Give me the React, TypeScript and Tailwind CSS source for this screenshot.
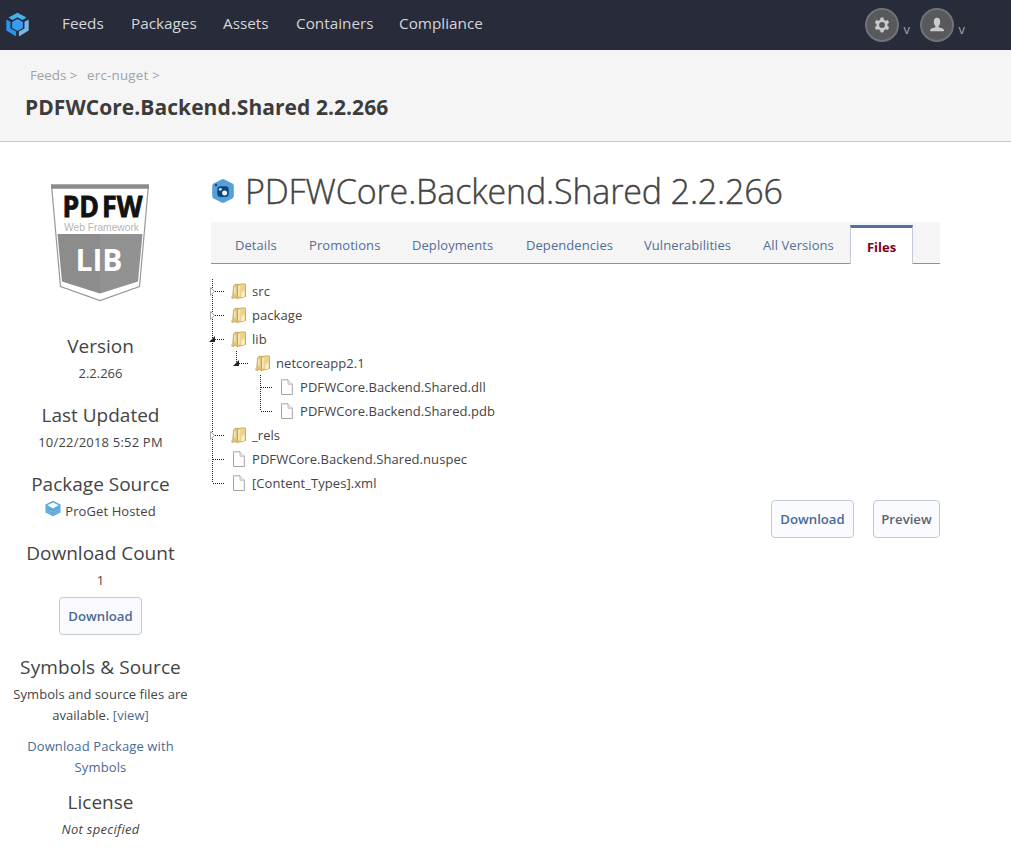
import React from "react";

function LogoIcon() {
  return (
    <svg width="25" height="26" viewBox="0 0 24 26" className="block">
      <path d="M3 5.500 12 .8l9 4.700-4 2.400-5-2.600-5 2.600z" fill="#41b4ee" />
      <path d="M.8 7.600 5 9.800v6.600l5.600 3.100v5L.8 18.600z" fill="#2b93ec" />
      <path d="M23.200 7.600 19 9.800v6.600l-5.600 3.100v5l9.800-5.900z" fill="#79b9ea" />
      <path d="m12 7 5.400 3v6L12 19l-5.400-3v-6z" fill="#3a9bf4" />
    </svg>
  );
}

function GearIcon() {
  return (
    <svg width="16" height="16" viewBox="0 0 16 16" className="block">
      <g fill="#c9cacc">
        <circle cx="8" cy="8" r="5.6" />
        <rect x="6.3" y=".6" width="3.4" height="14.8" rx=".8" />
        <rect x="6.3" y=".6" width="3.4" height="14.8" rx=".8" transform="rotate(60 8 8)" />
        <rect x="6.3" y=".6" width="3.4" height="14.8" rx=".8" transform="rotate(120 8 8)" />
      </g>
      <circle cx="8" cy="8" r="2.9" fill="#58595c" />
    </svg>
  );
}

function UserIcon() {
  return (
    <svg width="16" height="16" viewBox="0 0 16 16" className="block">
      <ellipse cx="8" cy="5" rx="3.2" ry="4.2" fill="#c9cacc" />
      <path d="M6.4 8h3.2v2.2l4.2 1.4q1.2.5 1.2 2.6H1q0-2.1 1.2-2.6l4.2-1.4z" fill="#c9cacc" />
    </svg>
  );
}

function NugetIcon() {
  return (
    <svg width="24" height="26" viewBox="0 0 24 26" className="block">
      <path d="M10.6 1.4q1.4-.7 2.8 0l8 4.2q1.4.8 1.4 2.3v10.2q0 1.5-1.4 2.3l-8 4.2q-1.4.7-2.8 0l-8-4.2q-1.4-.8-1.4-2.3V7.900q0-1.500 1.400-2.300z" fill="#559fdb" />
      <rect x="6.300" y="8.200" width="11.400" height="10.800" rx="3.200" fill="#0e4679" />
      <circle cx="5" cy="7" r="1.200" fill="#0e4679" />
      <circle cx="9.300" cy="11.300" r="1.400" fill="#d6ebfa" />
      <circle cx="13.600" cy="15" r="2.500" fill="#e4f3fd" />
    </svg>
  );
}

function HostedIcon() {
  return (
    <svg width="16" height="17" viewBox="0 0 16 17" className="block">
      <path d="M.5 4.500 8 .7l7.500 3.800v8L8 16.300.5 12.500z" fill="#5da7d9" />
      <path d="M2.200 5.200 8 2.600l5.800 2.600L8 8.400z" fill="#f4fafe" />
      <path d="M.5 8.500 8 12.200l7.500-3.700M.5 10.800 8 14.500l7.500-3.700" fill="none" stroke="#8fc4e6" strokeWidth=".6" />
    </svg>
  );
}

function PackageBadge() {
  return (
    <svg width="100" height="118" viewBox="0 0 100 118" className="mr-px block">
      <path d="M1.500 1h97l-9 101.500L50 116.500l-39.500-14z" fill="#fff" stroke="#999" strokeWidth="1.200" />
      <path d="M1 .5h98v4.200H1z" fill="#8b8b8b" />
      <path d="M7.500 50H50v59.500L12 97.500z" fill="#8c8c8c" />
      <path d="M50 50h42.500L88 97.500 50 109.500z" fill="#929292" />
      <text x="12.500" y="32.500" textLength="80" lengthAdjust="spacingAndGlyphs" wordSpacing="-4" fontFamily="Open Sans" fontWeight="700" fontSize="28" fill="#111" stroke="#111" strokeWidth=".8">PD FW</text>
      <text x="14" y="47" textLength="75" lengthAdjust="spacingAndGlyphs" fontFamily="Liberation Sans" fontSize="10.500" fill="#b5b5b5">Web Framework</text>
      <text x="25.500" y="87" textLength="47" lengthAdjust="spacingAndGlyphs" fontFamily="Open Sans" fontWeight="700" fontSize="31" fill="#fff">LIB</text>
    </svg>
  );
}

function FolderIcon() {
  return (
    <svg width="16" height="16" viewBox="0 0 16 16" className="block">
      <path d="M2.500 3.500 4 1.200h3v12.300L3 15.200H.8q-.3-1.500 1-3z" fill="#dfc67e" stroke="#bfa25a" strokeWidth=".8" />
      <path d="M6.500 1.500 13.500.8q1 0 1 1v11.800L7 15.400H5.500l1-2z" fill="#ecd48c" stroke="#bd9d50" strokeWidth=".8" />
      <path d="M8 3v10M4 4v7" stroke="#fbf0c8" strokeWidth="1.200" />
      <path d="M10.500 8.500h3v5l-3 .8z" fill="#fbefc6" />
    </svg>
  );
}

function FileIcon() {
  return (
    <svg width="16" height="16" viewBox="0 0 16 16" className="block">
      <path d="M2.500.8H9l4.300 4.400v10.300H2.500z" fill="#fdfdfd" stroke="#a3a3a3" strokeWidth="1" />
      <path d="M9 .8v4.400h4.300" fill="#eee" stroke="#b0b0b0" strokeWidth=".8" />
    </svg>
  );
}

type Row = { name: string; kind: "folder" | "file"; depth: number; state?: "open" | "closed"; last?: boolean };

const rows: Row[] = [
  { name: "src", kind: "folder", depth: 0, state: "closed" },
  { name: "package", kind: "folder", depth: 0, state: "closed" },
  { name: "lib", kind: "folder", depth: 0, state: "open" },
  { name: "netcoreapp2.1", kind: "folder", depth: 1, state: "open", last: true },
  { name: "PDFWCore.Backend.Shared.dll", kind: "file", depth: 2 },
  { name: "PDFWCore.Backend.Shared.pdb", kind: "file", depth: 2, last: true },
  { name: "_rels", kind: "folder", depth: 0, state: "closed" },
  { name: "PDFWCore.Backend.Shared.nuspec", kind: "file", depth: 0 },
  { name: "[Content_Types].xml", kind: "file", depth: 0, last: true },
];

function Branch({ row }: { row: Row }) {
  return (
    <svg width="24" height="24" viewBox="0 0 24 24" className="block shrink-0">
      <path d={row.last ? "M4.500 0v12" : "M4.500 0v24"} stroke="#222" strokeDasharray="1 1" />
      <path d="M5 12.500h12" stroke="#222" strokeDasharray="1 1" />
      {row.state === "closed" && <path d="M2.500 8.500 6.500 12.500l-4 4z" fill="#fff" stroke="#999" strokeWidth=".8" />}
      {row.state === "open" && <path d="M7 9v6H1z" fill="#222" />}
    </svg>
  );
}

function Guide({ on }: { on: boolean }) {
  return (
    <svg width="24" height="24" viewBox="0 0 24 24" className="block shrink-0">
      {on && <path d="M4.500 0v24" stroke="#222" strokeDasharray="1 1" />}
    </svg>
  );
}

function TreeRow({ row }: { row: Row }) {
  return (
    <li className="flex h-6 items-center">
      {row.depth > 0 && <Guide on />}
      {row.depth > 1 && <Guide on={false} />}
      <Branch row={row} />
      <span className="-ml-px mr-[5px]">{row.kind === "folder" ? <FolderIcon /> : <FileIcon />}</span>
      <span className="pt-0.5 tracking-[0.06px]">{row.name}</span>
    </li>
  );
}

function Button({ children, className }: { children: React.ReactNode; className: string }) {
  return (
    <button className={`h-[38px] rounded border border-[#c3c9d3] bg-[#fafbfe] pt-px text-[13.2px] font-semibold ${className}`}>{children}</button>
  );
}

function Fact({ title, children }: { title: string; children: React.ReactNode }) {
  return (
    <section className="flex h-[69px] flex-col items-center">
      <h3 className="text-[19px] leading-[30px] text-[#444]">{title}</h3>
      <div className="mt-px flex h-6 items-center">{children}</div>
    </section>
  );
}

const nav = [
  { label: "Feeds", cls: "w-[69px]" },
  { label: "Packages", cls: "w-[92px]" },
  { label: "Assets", cls: "w-[73px]" },
  { label: "Containers", cls: "w-[103px]" },
  { label: "Compliance", cls: "w-[110px]" },
];

const tabs = [
  { label: "Details", cls: "w-[74px]" },
  { label: "Promotions", cls: "w-[103px]" },
  { label: "Deployments", cls: "w-[114px]" },
  { label: "Dependencies", cls: "w-[118px]" },
  { label: "Vulnerabilities", cls: "w-[119px]" },
  { label: "All Versions", cls: "w-[87px]" },
];

export default function App() {
  return (
    <div className="h-[852px] w-[1011px] overflow-hidden bg-white font-['Open_Sans','Noto_Sans',sans-serif] text-[13px] text-[#444] whitespace-nowrap">
      <header className="flex h-[50px] items-center bg-[#282b3a] pl-[5px]">
        <LogoIcon />
        <nav className="ml-8 flex h-[48px] flex-1 items-center pb-[3px] text-[15.3px] text-[#d4d5d8]">
          {nav.map((n) => (
            <a key={n.label} className={n.cls}>{n.label}</a>
          ))}
        </nav>
        <div className="flex items-center pr-[46px]">
          <div className="flex size-[34px] items-center justify-center rounded-full border-2 border-[#707278] bg-[#58595c]"><GearIcon /></div>
          <span className="ml-[5px] w-4 pt-2 text-[13px] leading-4 text-[#a5a6aa]">v</span>
          <div className="flex size-[34px] items-center justify-center rounded-full border-2 border-[#707278] bg-[#58595c]"><UserIcon /></div>
          <span className="ml-[5px] pt-2 text-[13px] leading-4 text-[#a5a6aa]">v</span>
        </div>
      </header>

      <div className="h-[92px] border-b border-[#c8c8c8] bg-[#f5f5f5] pt-4">
        <div className="flex h-5 items-center pl-[30px] text-[13.3px] text-[#9ea3a8]">
          <span className="w-[57px]">Feeds &gt;</span>
          <span className="tracking-[0.25px]">erc-nuget &gt;</span>
        </div>
        <h1 className="pl-[25px] pt-1.5 text-[21px] font-bold leading-[30px] tracking-[0.05px] text-[#3c3c3c]">PDFWCore.Backend.Shared 2.2.266</h1>
      </div>

      <main className="flex">
        <aside className="flex w-[201px] flex-col items-center pt-[42px]">
          <PackageBadge />
          <div className="mt-[29px]">
            <Fact title="Version">2.2.266</Fact>
            <Fact title="Last Updated"><span className="tracking-[0.2px]">10/22/2018 5:52 PM</span></Fact>
            <Fact title="Package Source">
              <span className="mr-1 -mt-2"><HostedIcon /></span><span className="tracking-[0.1px]">ProGet Hosted</span>
            </Fact>
            <Fact title="Download Count">1</Fact>
          </div>
          <Button className="-mt-[10px] w-[83px] shrink-0 text-[#4a6a94]">Download</Button>
          <h3 className="mt-[17px] text-[19px] leading-[30px] tracking-[0.1px]">Symbols &amp; Source</h3>
          <p className="mt-[2px] text-center leading-[21px] tracking-[0.06px]">
            Symbols and source files are<br />available. <a className="text-[#4a6a94]">[view]</a>
          </p>
          <p className="mt-[10px] text-center leading-[21px] tracking-[0.13px] text-[#4a6a94]">Download Package with<br />Symbols</p>
          <h3 className="mt-[9px] text-[19px] leading-[30px]">License</h3>
          <p className="text-[13px] italic leading-6 tracking-[0.3px]">Not specified</p>
        </aside>

        <section className="ml-[10px] w-[729px] pt-6">
          <div className="flex h-[50px] items-center">
            <NugetIcon />
            <h2 className="ml-[10px] text-[34px] font-light leading-[50px] tracking-[-0.14px] text-[#444] [-webkit-text-stroke:0.4px_#444]">PDFWCore.Backend.Shared 2.2.266</h2>
          </div>
          <div className="mt-[6px] flex h-[42px] bg-[#f5f5f5]">
            <nav className="flex w-[639px] items-center border-b border-[#8193ae] pl-6 pt-1.5 tracking-[0.07px] text-[#526f98]">
              {tabs.map((t) => (
                <a key={t.label} className={`shrink-0 ${t.cls}`}>{t.label}</a>
              ))}
            </nav>
            <div className="mt-[3px] flex w-[63px] items-center justify-center border-x border-t-[3px] border-x-[#c5cbd5] border-t-[#4d729f] bg-white pt-[3px] font-bold text-[#7d0022]">Files</div>
            <div className="flex-1 border-b border-[#8193ae]" />
          </div>
          <ul className="mt-[15px] -ml-[3px]">
            {rows.map((r) => (
              <TreeRow key={r.name} row={r} />
            ))}
          </ul>
          <div className="mt-[5px] flex justify-end gap-[19px]">
            <Button className="w-[83px] text-[#4a6a94]">Download</Button>
            <Button className="w-[67px] text-[#5c6370]">Preview</Button>
          </div>
        </section>
      </main>
    </div>
  );
}
